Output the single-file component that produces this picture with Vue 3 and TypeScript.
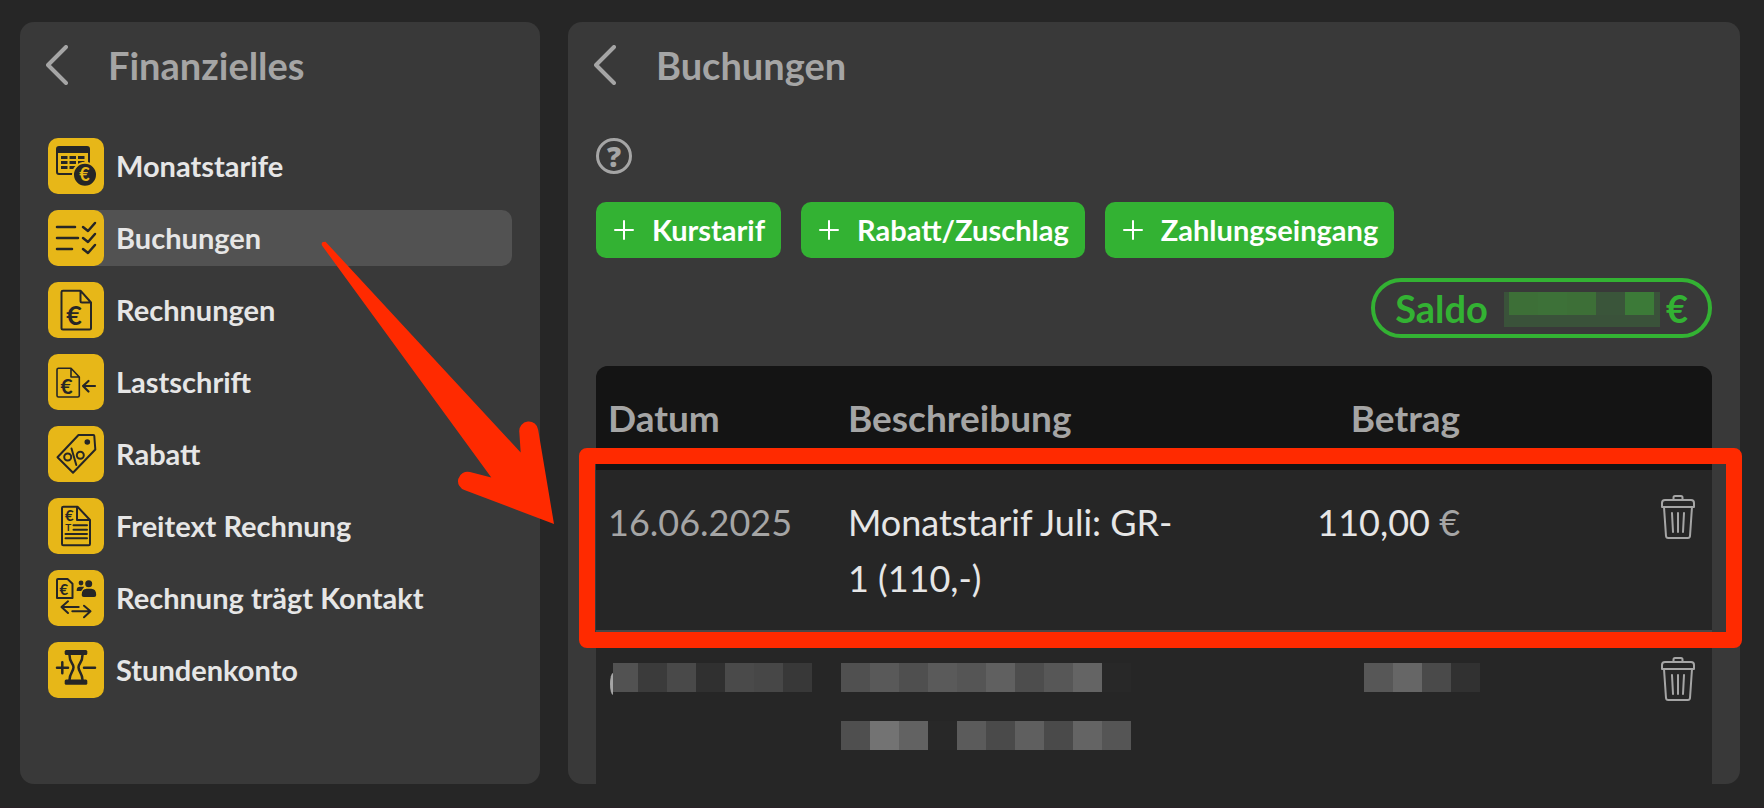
<script setup lang="ts">
interface MenuItem {
  id: string
  label: string
}

const menu: MenuItem[] = [
  { id: 'monatstarife', label: 'Monatstarife' },
  { id: 'buchungen', label: 'Buchungen' },
  { id: 'rechnungen', label: 'Rechnungen' },
  { id: 'lastschrift', label: 'Lastschrift' },
  { id: 'rabatt', label: 'Rabatt' },
  { id: 'freitext', label: 'Freitext Rechnung' },
  { id: 'kontakt', label: 'Rechnung trägt Kontakt' },
  { id: 'stundenkonto', label: 'Stundenkonto' },
]
const active = 'buchungen'

const actions: string[] = ['Kurstarif', 'Rabatt/Zuschlag', 'Zahlungseingang']

// Grey levels of the tiles that hide private values
const hiddenDate = ['#525252', '#3b3b3b', '#494949', '#303030', '#4a4a4a', '#474747', '#383838']
const hiddenText = [
  ['#505050', '#595959', '#4f4f4f', '#5a5a5a', '#555555', '#606060', '#4d4d4d', '#575757', '#646464', '#282828'],
  ['#4f4f4f', '#737373', '#626262', '#282828', '#5b5b5b', '#4a4a4a', '#5f5f5f', '#4a4a4a', '#646464', '#555555'],
]
const hiddenAmount = ['#575757', '#666666', '#4a4a4a', '#313131']
const hiddenSaldo = ['#3d6f37', '#3d7138', '#3d6f37', '#3a553a', '#3c7a38']
</script>

<template>
  <div class="page">
    <aside class="panel side">
      <header class="head">
        <button class="back" type="button" aria-label="Zurück">
          <svg viewBox="0 0 22 40"><path d="M20 2 2 20 20 38" /></svg>
        </button>
        <h1>Finanzielles</h1>
      </header>
      <nav class="menu">
        <a
          v-for="item in menu"
          :key="item.id"
          :href="'#' + item.id"
          class="item"
          :class="{ active: item.id === active }"
        >
          <svg class="tile" viewBox="0 0 56 56" aria-hidden="true">
            <g v-if="item.id === 'monatstarife'">
              <rect x="9" y="9" width="32" height="27" rx="2" />
              <path class="solid" d="M9 9h32v6H9z" />
              <path class="cells" d="M13 19.5h24M13 24.5h24M13 29.5h24" />
              <circle class="coin" cx="37" cy="36.7" r="12" />
              <text class="light" x="36.6" y="43" font-size="18">€</text>
            </g>
            <g v-else-if="item.id === 'buchungen'" class="bold">
              <path d="M9 17h18M9 28h21M9 39h15" />
              <path d="m35 17 5 4 7-8M35 28l5 4 7-8M35 39l5 4 7-8" />
            </g>
            <g v-else-if="item.id === 'rechnungen'">
              <path d="M15 8.7h17.5L43 20.500V46q0 1.500-1.500 1.500h-26.500q-1.500 0-1.500-1.500V10q0-1.300 1.500-1.300zM32.500 8.700v10.300q0 1.500 1.500 1.500h9" />
              <text x="26" y="43" font-size="27">€</text>
            </g>
            <g v-else-if="item.id === 'lastschrift'" class="fine">
              <path d="M10.500 14.300H23l8.300 8.700V41.500q0 1.500-1.500 1.500H10.500q-1.500 0-1.500-1.500V15.800q0-1.500 1.500-1.500zM23 14.300V23h8.300" />
              <text x="18.500" y="40" font-size="21">€</text>
              <path class="thick" d="M47 32H35M40.500 27l-5.500 5 5.500 5.500" />
            </g>
            <g v-else-if="item.id === 'rabatt'">
              <path d="M30.500 9h14.800q1 0 1 1l1 13.500L25 46.700 9.500 31.300z" />
              <circle class="dot" cx="39.300" cy="16" r="2.800" />
              <circle cx="19.700" cy="31" r="3.500" />
              <circle cx="32.300" cy="29.300" r="3.500" />
              <path d="m23.500 22.500 4.800 16.500" />
            </g>
            <g v-else-if="item.id === 'freitext'">
              <path d="M15.500 8.700h14L42 22v24q0 1.300-1.300 1.300H15.300q-1.300 0-1.300-1.300V10q0-1.300 1.500-1.300zM29 8.700V22h13" />
              <text x="21.300" y="23" font-size="15">€</text>
              <text x="20.300" y="33" font-size="10">T</text>
              <path d="M25.500 27.300H39M25.500 31.700H39M17.500 36H39M17.500 40.300H39" />
            </g>
            <g v-else-if="item.id === 'kontakt'">
              <path d="M10 9h9.500l5 4.700V28H9V10q0-1 1-1z" />
              <text x="15.800" y="25.300" font-size="15">€</text>
              <circle class="dot" cx="33" cy="13" r="2.400" />
              <path class="dot" d="M28.700 21v-1q0-3.300 3.500-3.300h4l-3 4.300z" />
              <circle class="dot" cx="40.700" cy="13.700" r="3.500" />
              <path class="dot" d="M33.700 25q0-6.300 5-6.300h4.500q5 0 5 6.300 0 2-2 2H35.700q-2 0-2-2z" />
              <path d="M30.700 37H14M20 31.300 13.500 37l6.500 6M24.300 41.300h17.500M36 35.700l6.500 5.600-6.500 6" />
            </g>
            <g v-else class="bold">
              <rect class="dot" x="16.700" y="8" width="22.600" height="5" rx="1.500" />
              <rect class="dot" x="16.700" y="37.500" width="22.600" height="5.300" rx="1.500" />
              <path d="M21.500 13c0 8 4 8 4 12.300s-4 5.700-4 12.700M34.500 13c0 8-4 8-4 12.300s4 5.700 4 12.700M9 25.700h11M14.300 20.300v11M36 25.700h11" />
            </g>
          </svg>
          <span>{{ item.label }}</span>
        </a>
      </nav>
    </aside>

    <main class="panel main">
      <header class="head">
        <button class="back" type="button" aria-label="Zurück">
          <svg viewBox="0 0 22 40"><path d="M20 2 2 20 20 38" /></svg>
        </button>
        <h2>Buchungen</h2>
      </header>

      <button class="help" type="button" aria-label="Hilfe">?</button>

      <div class="actions">
        <button v-for="label in actions" :key="label" class="add" type="button">
          <svg viewBox="0 0 20 20" aria-hidden="true"><path d="M1 10h18M10 1v18" /></svg>
          <span>{{ label }}</span>
        </button>
      </div>

      <div class="saldo">
        <span>Saldo</span>
        <span class="saldo-hidden">
          <i v-for="(c, i) in hiddenSaldo" :key="i" :style="{ background: c }"></i>
        </span>
        <span>€</span>
      </div>

      <div class="sheet">
        <table>
          <colgroup>
            <col class="c-date" />
            <col class="c-text" />
            <col class="c-amount" />
            <col />
          </colgroup>
          <thead>
            <tr>
              <th>Datum</th>
              <th>Beschreibung</th>
              <th class="amount">Betrag</th>
              <th></th>
            </tr>
          </thead>
          <tbody>
            <tr class="marked">
              <td class="muted">16.06.2025</td>
              <td>Monatstarif Juli: GR-<wbr />1 (110,-)</td>
              <td class="amount">110,00 <span class="muted">€</span></td>
              <td class="tools">
                <button class="trash" type="button" aria-label="Löschen">
                  <svg viewBox="0 0 36 46">
                    <path d="M13.500 6V3.500q0-1.500 1.500-1.500h6q1.500 0 1.500 1.500V6M2 13V9q0-3 3-3h26q3 0 3 3v4zM4 13l2 29q.2 2 2.200 2h19.600q2 0 2.200-2l2-29M12 19l1 19M18 19v19M24 19l-1 19" />
                  </svg>
                </button>
                <span class="marker"></span>
              </td>
            </tr>
            <tr class="private">
              <td>
                <div class="mosaic">
                  <span class="peek"></span>
                  <i v-for="(c, i) in hiddenDate" :key="i" :style="{ background: c }"></i>
                </div>
              </td>
              <td>
                <div v-for="(line, n) in hiddenText" :key="n" class="mosaic wide">
                  <i v-for="(c, i) in line" :key="i" :style="{ background: c }"></i>
                </div>
              </td>
              <td>
                <div class="mosaic end">
                  <i v-for="(c, i) in hiddenAmount" :key="i" :style="{ background: c }"></i>
                </div>
              </td>
              <td class="tools">
                <button class="trash" type="button" aria-label="Löschen">
                  <svg viewBox="0 0 36 46">
                    <path d="M13.500 6V3.500q0-1.500 1.500-1.500h6q1.500 0 1.500 1.500V6M2 13V9q0-3 3-3h26q3 0 3 3v4zM4 13l2 29q.2 2 2.200 2h19.600q2 0 2.200-2l2-29M12 19l1 19M18 19v19M24 19l-1 19" />
                  </svg>
                </button>
              </td>
            </tr>
          </tbody>
        </table>
      </div>
    </main>

    <svg class="arrow" viewBox="320 240 236 286" aria-hidden="true">
      <path d="M322 245.500Q320.500 241.500 325.500 241.700L520.700 452.500 519.300 432A9.500 9.500 0 0 1 538.200 430L554 524 465 490.300A9.400 9.400 0 0 1 470 472L491.300 477.600z" />
    </svg>
  </div>
</template>

<style>
body {
  margin: 0;
  background: #262626;
}
</style>

<style scoped>
.page {
  position: relative;
  box-sizing: border-box;
  min-height: 100vh;
  padding: 22px 24px 23px 20px;
  border-bottom: 1px solid #2a2127;
  display: grid;
  grid-template-columns: minmax(360px, 520px) minmax(0, 1fr);
  gap: 28px;
  background: #262626;
  color: #e6e6e6;
  font-family: Lato, "Open Sans", sans-serif;
  font-size: 36px;
}
.panel {
  background: #393939;
  border-radius: 14px;
  padding: 0 28px;
}
.main {
  display: flex;
  flex-direction: column;
}
button {
  font: inherit;
  color: inherit;
  border: 0;
  padding: 0;
  background: none;
  cursor: pointer;
}
.head {
  display: flex;
  align-items: center;
  gap: 40px;
  height: 86px;
  margin: 0 0 30px -2px;
  color: #a5a5a5;
}
.head h1,
.head h2 {
  margin: 0;
  font-size: 38px;
  line-height: 44px;
  font-weight: 700;
}
.back svg {
  display: block;
  width: 22px;
  height: 40px;
  fill: none;
  stroke: #a5a5a5;
  stroke-width: 4;
  stroke-linecap: round;
  stroke-linejoin: round;
}
.menu {
  display: flex;
  flex-direction: column;
  gap: 16px;
}
.item {
  display: flex;
  align-items: center;
  gap: 12px;
  border-radius: 10px;
  color: #e6e6e6;
  font-size: 29px;
  line-height: 34px;
  font-weight: 700;
  text-decoration: none;
}
.item.active {
  background: #525252;
}
.tile {
  flex: none;
  width: 56px;
  height: 56px;
  border-radius: 10px;
  background: #e7b718;
  fill: none;
  stroke: #262626;
  stroke-width: 2;
  stroke-linecap: round;
  stroke-linejoin: round;
}
.tile text {
  fill: #262626;
  stroke: none;
  font-family: Lato, sans-serif;
  font-weight: 700;
  text-anchor: middle;
}
.tile .bold {
  stroke-width: 2.5;
}
.tile .fine {
  stroke-width: 1.6;
}
.tile .thick {
  stroke-width: 2.2;
}
.tile .solid,
.tile .dot {
  fill: #262626;
  stroke: none;
}
.tile .cells {
  stroke-width: 3;
  stroke-dasharray: 6.5 2;
  stroke-linecap: butt;
}
.tile .coin {
  fill: #262626;
  stroke: #e7b718;
  stroke-width: 2;
}
.tile .light {
  fill: #e7b718;
}
.help {
  width: 36px;
  height: 36px;
  flex: none;
  border: 3px solid #a5a5a5;
  border-radius: 50%;
  color: #a5a5a5;
  font-family: "Open Sans", sans-serif;
  font-size: 28px;
  line-height: 30px;
  font-weight: 800;
}
.actions {
  display: flex;
  flex-wrap: wrap;
  gap: 20px;
  margin-top: 28px;
}
.add {
  display: flex;
  align-items: center;
  gap: 18px;
  height: 56px;
  padding: 0 16px 0 18px;
  border-radius: 10px;
  background: #33b233;
  color: #fff;
  font-size: 29px;
  line-height: 34px;
  font-weight: 700;
}
.add svg {
  width: 20px;
  height: 20px;
  fill: none;
  stroke: #fff;
  stroke-width: 2;
  stroke-linecap: round;
}
.saldo {
  align-self: flex-end;
  display: flex;
  align-items: center;
  box-sizing: border-box;
  height: 60px;
  margin: 20px 0 28px;
  padding: 0 20px;
  border: 4px solid #33b233;
  border-radius: 30px;
  color: #33b233;
  font-size: 38px;
  font-weight: 700;
}
.saldo-hidden {
  display: flex;
  align-items: flex-start;
  box-sizing: border-box;
  width: 156px;
  height: 35px;
  margin: 2px 6px 0 16px;
  padding-left: 5px;
  background: #3a523a;
}
.saldo-hidden i {
  width: 29px;
  height: 23px;
}
.sheet {
  flex: 1;
  border-radius: 12px 12px 0 0;
  background: #262626;
}
table {
  width: 100%;
  table-layout: fixed;
  border-collapse: separate;
  border-spacing: 0;
  line-height: 56px;
}
.c-date {
  width: 21.5%;
}
.c-text {
  width: 32%;
}
.c-amount {
  width: 25%;
}
th,
td {
  padding: 24px 12px;
}
th {
  background: #141414;
  color: #a5a5a5;
  font-size: 37px;
  font-weight: 700;
  text-align: left;
}
th:first-child {
  border-top-left-radius: 12px;
}
th:last-child {
  border-top-right-radius: 12px;
}
td {
  vertical-align: top;
}
.amount {
  text-align: right;
  white-space: nowrap;
}
.muted {
  color: #a5a5a5;
}
.marked {
  position: relative;
}
.marked td {
  border-bottom: 2px solid #484848;
}
.tools {
  padding-right: 16px;
  text-align: right;
  line-height: 0;
}
.trash svg {
  display: block;
  width: 36px;
  height: 46px;
  fill: none;
  stroke: #a5a5a5;
  stroke-width: 2;
  stroke-linecap: round;
  stroke-linejoin: round;
}
.marker {
  position: absolute;
  inset: -22px -30px -16px -17px;
  border: 16px solid #ff2a00;
  border-radius: 8px;
  pointer-events: none;
}
.private td {
  padding-top: 31px;
  padding-bottom: 0;
}
.private .tools {
  padding-top: 24px;
}
.mosaic {
  display: flex;
  height: 29px;
  margin: 0 0 29px 2px;
}
.mosaic i {
  flex: none;
  width: 29px;
}
.peek {
  width: 3px;
  height: 22px;
  margin-top: 10px;
  border-radius: 3px 0 0 3px / 11px 0 0 11px;
  background: #a5a5a5;
}
.peek + i {
  width: 25px;
}
.mosaic.wide {
  margin-left: -7px;
}
.mosaic.end {
  justify-content: flex-end;
  margin-right: -20px;
}
.arrow {
  position: absolute;
  left: 320px;
  top: 240px;
  width: 236px;
  height: 286px;
  fill: #ff2a00;
  pointer-events: none;
}
</style>
